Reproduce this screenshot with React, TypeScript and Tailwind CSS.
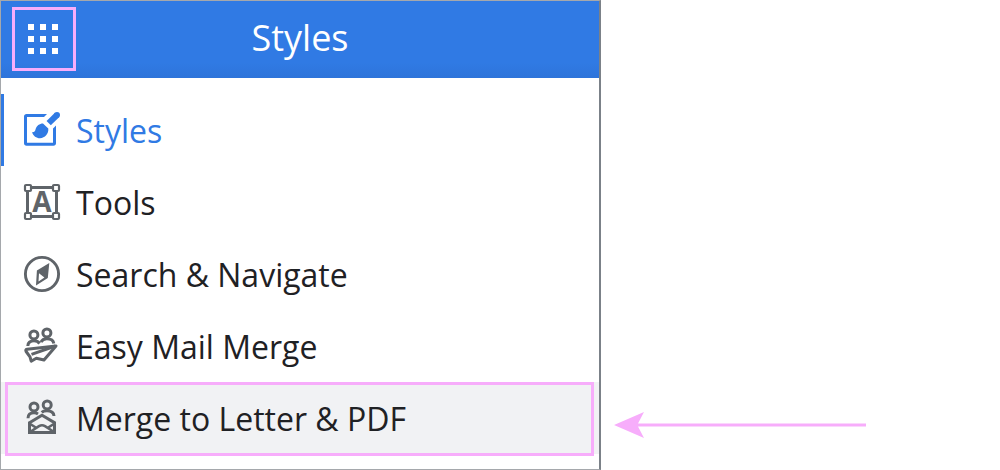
import React from "react";
import clsx from "clsx";

const StylesIcon = () => (
  <svg className="size-9 shrink-0 overflow-visible" viewBox="0 0 36 36" fill="none" aria-hidden="true">
    <path d="M23 2H2.500C1 2 0 3 0 4.500V31.300C0 32.800 1 33.800 2.500 33.800H29.500C31 33.800 32 32.800 32 31.300V13.500L29 16.500V30.800H3V5H20Z" fill="currentColor" />
    <path d="M33 3L24.700 11.200" stroke="currentColor" strokeWidth="6" />
    <circle cx="33" cy="3" r="3" fill="currentColor" />
    <path d="M8 20.200C10.200 20.400 11 19.500 11.500 17.500C12.400 13.800 15.500 11.500 19 11.500L24.300 16.600C24.800 21.800 20.900 26.200 16 26.200C12.300 26.200 9.300 24 8 20.200Z" fill="currentColor" />
  </svg>
);

const ToolsIcon = () => (
  <svg className="size-9 shrink-0 overflow-visible" viewBox="0 0 36 36" fill="none" aria-hidden="true">
    <path d="M7 3.500H29M7 32.500H29M3.500 7V29M32.500 7V29" stroke="currentColor" strokeWidth="3" />
    <g stroke="currentColor" strokeWidth="2.200">
      <rect x="1" y="1" width="6" height="6" rx="1" fill="#fff" />
      <rect x="29" y="1" width="6" height="6" rx="1" fill="#fff" />
      <rect x="1" y="29" width="6" height="6" rx="1" fill="#fff" />
      <rect x="29" y="29" width="6" height="6" rx="1" fill="#fff" />
    </g>
    <text x="18" y="28" textAnchor="middle" fill="currentColor" className="font-['Open_Sans',sans-serif] text-[28px] font-bold">A</text>
  </svg>
);

const NavigateIcon = () => (
  <svg className="size-9 shrink-0 overflow-visible" viewBox="0 0 36 36" fill="none" aria-hidden="true">
    <circle cx="18" cy="18" r="16.600" stroke="currentColor" strokeWidth="2.900" />
    <path fillRule="evenodd" d="M25.300 7L12.900 14.600L12 29.600L23.800 22ZM15 17.300L20.400 21.600L14.500 25.600Z" fill="currentColor" />
  </svg>
);

const MailMergeIcon = () => (
  <svg className="size-9 shrink-0 overflow-visible" viewBox="0 0 36 36" fill="none" stroke="currentColor" strokeWidth="3" aria-hidden="true">
    <circle cx="9.900" cy="6.900" r="4" />
    <circle cx="22.900" cy="4.900" r="4" />
    <path d="M3.800 18C4 14.500 6 12.800 10 12.800C12.500 12.800 14.300 13.700 15.600 15.500" />
    <path d="M17 14.200C18 11.900 20 10.800 22.800 10.800C26.600 10.800 29.400 12.200 29.800 15.500" />
    <path d="M32 18L3 21.300C1.700 21.500 1.500 22.500 2.100 23.500L6 28.800L7.200 33.200L12.300 30.200L20 32L32 18Z" strokeLinejoin="round" />
    <path d="M7.500 26.300L31.500 18" />
  </svg>
);

const LetterMergeIcon = () => (
  <svg className="size-9 shrink-0 overflow-visible" viewBox="0 0 36 36" fill="none" stroke="currentColor" strokeWidth="3" aria-hidden="true">
    <circle cx="10" cy="6.900" r="4" />
    <circle cx="23.200" cy="4.900" r="4" />
    <path d="M4 18.300C4 14.700 6 12.800 10 12.800C11.500 12.800 12.800 13.100 14 13.900" />
    <path d="M17.700 12.400C18.700 11.400 20.500 10.800 23 10.800C27 10.800 29.700 12.200 30 16" />
    <path d="M5.500 22.700L18 15.200L30.500 22.700V32.500H5.500Z" />
    <path d="M5.500 23.500L12.500 28M30.500 23.500L23.500 28M6 32L15 26.200Q18 24.400 21 26.200L30 32" strokeWidth="2.600" />
  </svg>
);

const menuItems = [
  { label: "Styles", icon: StylesIcon },
  { label: "Tools", icon: ToolsIcon },
  { label: "Search & Navigate", icon: NavigateIcon },
  { label: "Easy Mail Merge", icon: MailMergeIcon },
  { label: "Merge to Letter & PDF", icon: LetterMergeIcon },
];

const App = () => {
  const [active, setActive] = React.useState("Styles");

  return (
    <main className="min-h-screen bg-white font-['Open_Sans','Noto_Sans',sans-serif] text-[#1f2124]">
      <section className="w-[60.1%] border border-r-2 border-[#a5a8ac] border-r-[#7b8188] pb-[15px]">
        {/* Header */}
        <header className="grid h-[77px] grid-cols-[64px_1fr_64px] items-start bg-linear-to-b from-[#307ae4] from-80% to-[#2e74da] px-[11px] pt-[6px]">
          <button
            type="button"
            aria-label="Open menu"
            className="grid size-16 grid-cols-[repeat(3,6px)] place-content-center gap-[6px] border-3 border-[#f7adfb] pr-[2px]"
          >
            {Array.from({ length: 9 }, (_, i) => (
              <span key={i} className="size-[6px] bg-white" />
            ))}
          </button>
          <h1 className="text-center text-[36px] leading-[62px] text-white">Styles</h1>
        </header>

        {/* Menu */}
        <nav className="pt-4">
          <ul>
            {menuItems.map(({ label, icon: Icon }, index) => {
              const highlighted = index === menuItems.length - 1;
              return (
                <li key={label} className="relative">
                  <button
                    type="button"
                    onClick={() => setActive(label)}
                    className={clsx(
                      "flex h-[72px] w-full items-center gap-4 border-l-3 pl-5 text-left text-[32px]",
                      active === label ? "border-[#307ae4] text-[#307ae4]" : "border-transparent",
                      highlighted && "bg-[#f1f2f4]"
                    )}
                  >
                    <span className={active === label ? "text-[#307ae4]" : "text-[#5f6469]"}>
                      <Icon />
                    </span>
                    <span className="pt-[2px]">{label}</span>
                  </button>
                  {highlighted && (
                    <>
                      <span className="pointer-events-none absolute -bottom-[2px] left-1 right-[5px] top-0 border-3 border-[#f7adfb]" />
                      <svg className="absolute left-full top-[30px] ml-[15px] h-[26px] w-[252px]" viewBox="0 0 252 26" fill="#f7adfb" aria-hidden="true">
                        <path d="M0 13L30 0L24 11.500H252V14.500H24L30 26Z" />
                      </svg>
                    </>
                  )}
                </li>
              );
            })}
          </ul>
        </nav>
      </section>
    </main>
  );
};

export default App;
